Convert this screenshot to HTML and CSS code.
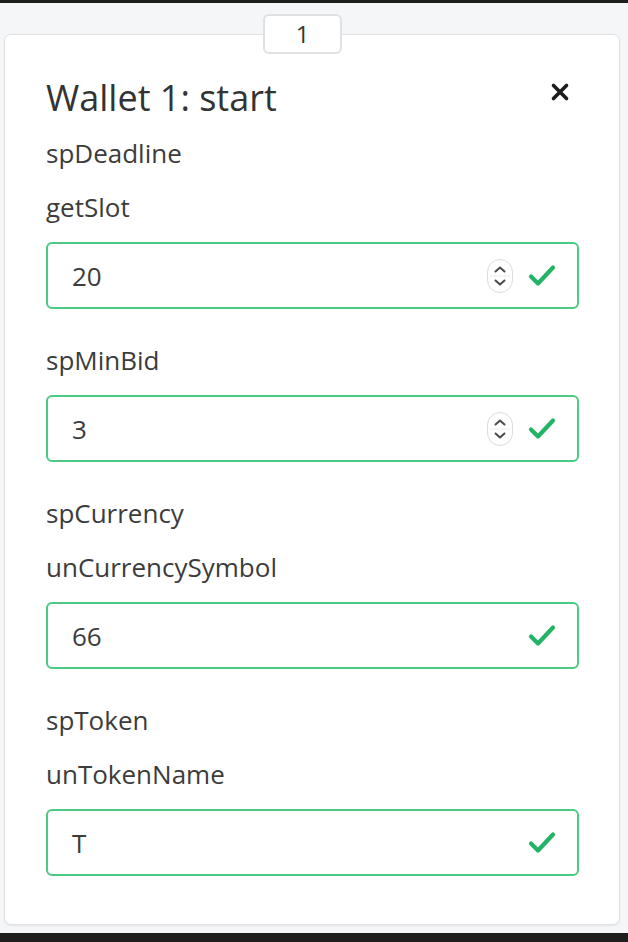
FILE: index.html
```html
<!DOCTYPE html>
<html>
<head>
<meta charset="utf-8">
<link rel="stylesheet" href="styles.css">
</head>
<body>
<div class="topbar"></div>
<main class="stage">
  <section class="card">
    <div class="tab">1</div>
    <header class="card-head">
      <h1 class="title">Wallet 1: start</h1>
      <button class="close" aria-label="close">
        <svg width="20" height="20" viewBox="0 0 20 20"><path d="M3.5 3.5 L16.5 16.5 M16.5 3.5 L3.5 16.5" stroke="#1c1c1c" stroke-width="3.6" stroke-linecap="round"/></svg>
      </button>
    </header>

    <div class="label">spDeadline</div>
    <div class="label sub">getSlot</div>
    <div class="field">
      <span class="value">20</span>
      <span class="spin">
        <svg width="26" height="34" viewBox="0 0 26 34"><rect x="0.5" y="0.5" width="25" height="33" rx="12.5" fill="#fff" stroke="#dcdcdc"/><line x1="3" y1="17" x2="23" y2="17" stroke="#ececec"/><path d="M8.5 12.5 L13 8.5 L17.5 12.5" fill="none" stroke="#4a4a4a" stroke-width="2" stroke-linecap="round" stroke-linejoin="round"/><path d="M8.5 21.5 L13 25.5 L17.5 21.5" fill="none" stroke="#4a4a4a" stroke-width="2" stroke-linecap="round" stroke-linejoin="round"/></svg>
      </span>
      <span class="check"><svg width="28" height="24" viewBox="0 0 28 24"><path d="M3 12.5 L10 19.5 L25 3.5" fill="none" stroke="#22b464" stroke-width="4.2" stroke-linecap="round" stroke-linejoin="round"/></svg></span>
    </div>

    <div class="label gap">spMinBid</div>
    <div class="field">
      <span class="value">3</span>
      <span class="spin">
        <svg width="26" height="34" viewBox="0 0 26 34"><rect x="0.5" y="0.5" width="25" height="33" rx="12.5" fill="#fff" stroke="#dcdcdc"/><line x1="3" y1="17" x2="23" y2="17" stroke="#ececec"/><path d="M8.5 12.5 L13 8.5 L17.5 12.5" fill="none" stroke="#4a4a4a" stroke-width="2" stroke-linecap="round" stroke-linejoin="round"/><path d="M8.5 21.5 L13 25.5 L17.5 21.5" fill="none" stroke="#4a4a4a" stroke-width="2" stroke-linecap="round" stroke-linejoin="round"/></svg>
      </span>
      <span class="check"><svg width="28" height="24" viewBox="0 0 28 24"><path d="M3 12.5 L10 19.5 L25 3.5" fill="none" stroke="#22b464" stroke-width="4.2" stroke-linecap="round" stroke-linejoin="round"/></svg></span>
    </div>

    <div class="label gap">spCurrency</div>
    <div class="label sub">unCurrencySymbol</div>
    <div class="field">
      <span class="value">66</span>
      <span class="check"><svg width="28" height="24" viewBox="0 0 28 24"><path d="M3 12.5 L10 19.5 L25 3.5" fill="none" stroke="#22b464" stroke-width="4.2" stroke-linecap="round" stroke-linejoin="round"/></svg></span>
    </div>

    <div class="label gap">spToken</div>
    <div class="label sub">unTokenName</div>
    <div class="field">
      <span class="value">T</span>
      <span class="check"><svg width="28" height="24" viewBox="0 0 28 24"><path d="M3 12.5 L10 19.5 L25 3.5" fill="none" stroke="#22b464" stroke-width="4.2" stroke-linecap="round" stroke-linejoin="round"/></svg></span>
    </div>
  </section>
</main>
</body>
</html>
```
FILE: styles.css
```css
html, body {
  margin: 0;
  padding: 0;
}
body {
  background: #1e1e1c;
  font-family: "Open Sans", "Noto Sans", sans-serif;
  color: #3a3a3a;
  height: 942px;
  overflow: hidden;
}
.topbar {
  height: 3px;
}
.stage {
  background: #f5f6f8;
  height: 930px;
  box-sizing: border-box;
  padding: 31px 8px 0 4px;
}
.card {
  position: relative;
  background: #fff;
  border: 1px solid #e0e2e5;
  border-radius: 7px;
  box-shadow: 0 1px 2px rgba(0,0,0,0.07);
  padding: 43px 40px 48px 41px;
}
.tab {
  position: absolute;
  top: -21px;
  left: 258px;
  width: 79px;
  height: 40px;
  box-sizing: border-box;
  background: #fff;
  border: 2px solid #dfe1e4;
  border-radius: 6px;
  font-size: 24px;
  line-height: 35px;
  text-align: center;
  color: #333;
}
.card-head {
  display: flex;
  align-items: flex-start;
  justify-content: space-between;
  height: 40px;
  margin-bottom: 20px;
}
.title {
  margin: 0;
  font-weight: 400;
  font-size: 36px;
  line-height: 40px;
  color: #333;
}
.close {
  border: 0;
  background: none;
  padding: 0;
  margin: 4px 9px 0 0;
  display: flex;
}
.label {
  font-size: 26px;
  line-height: 30px;
  color: #3c3c3c;
}
.label.sub {
  margin-top: 24px;
}
.label.gap {
  margin-top: 36px;
}
.field {
  margin-top: 20px;
  height: 67px;
  box-sizing: border-box;
  border: 2px solid #4bcb82;
  border-radius: 6px;
  display: flex;
  align-items: center;
  padding: 0 21px 0 24px;
}
.value {
  flex: 1;
  font-size: 26px;
  color: #3c3c3c;
}
.spin {
  display: flex;
  margin-right: 15px;
}
.check {
  display: flex;
}
```
